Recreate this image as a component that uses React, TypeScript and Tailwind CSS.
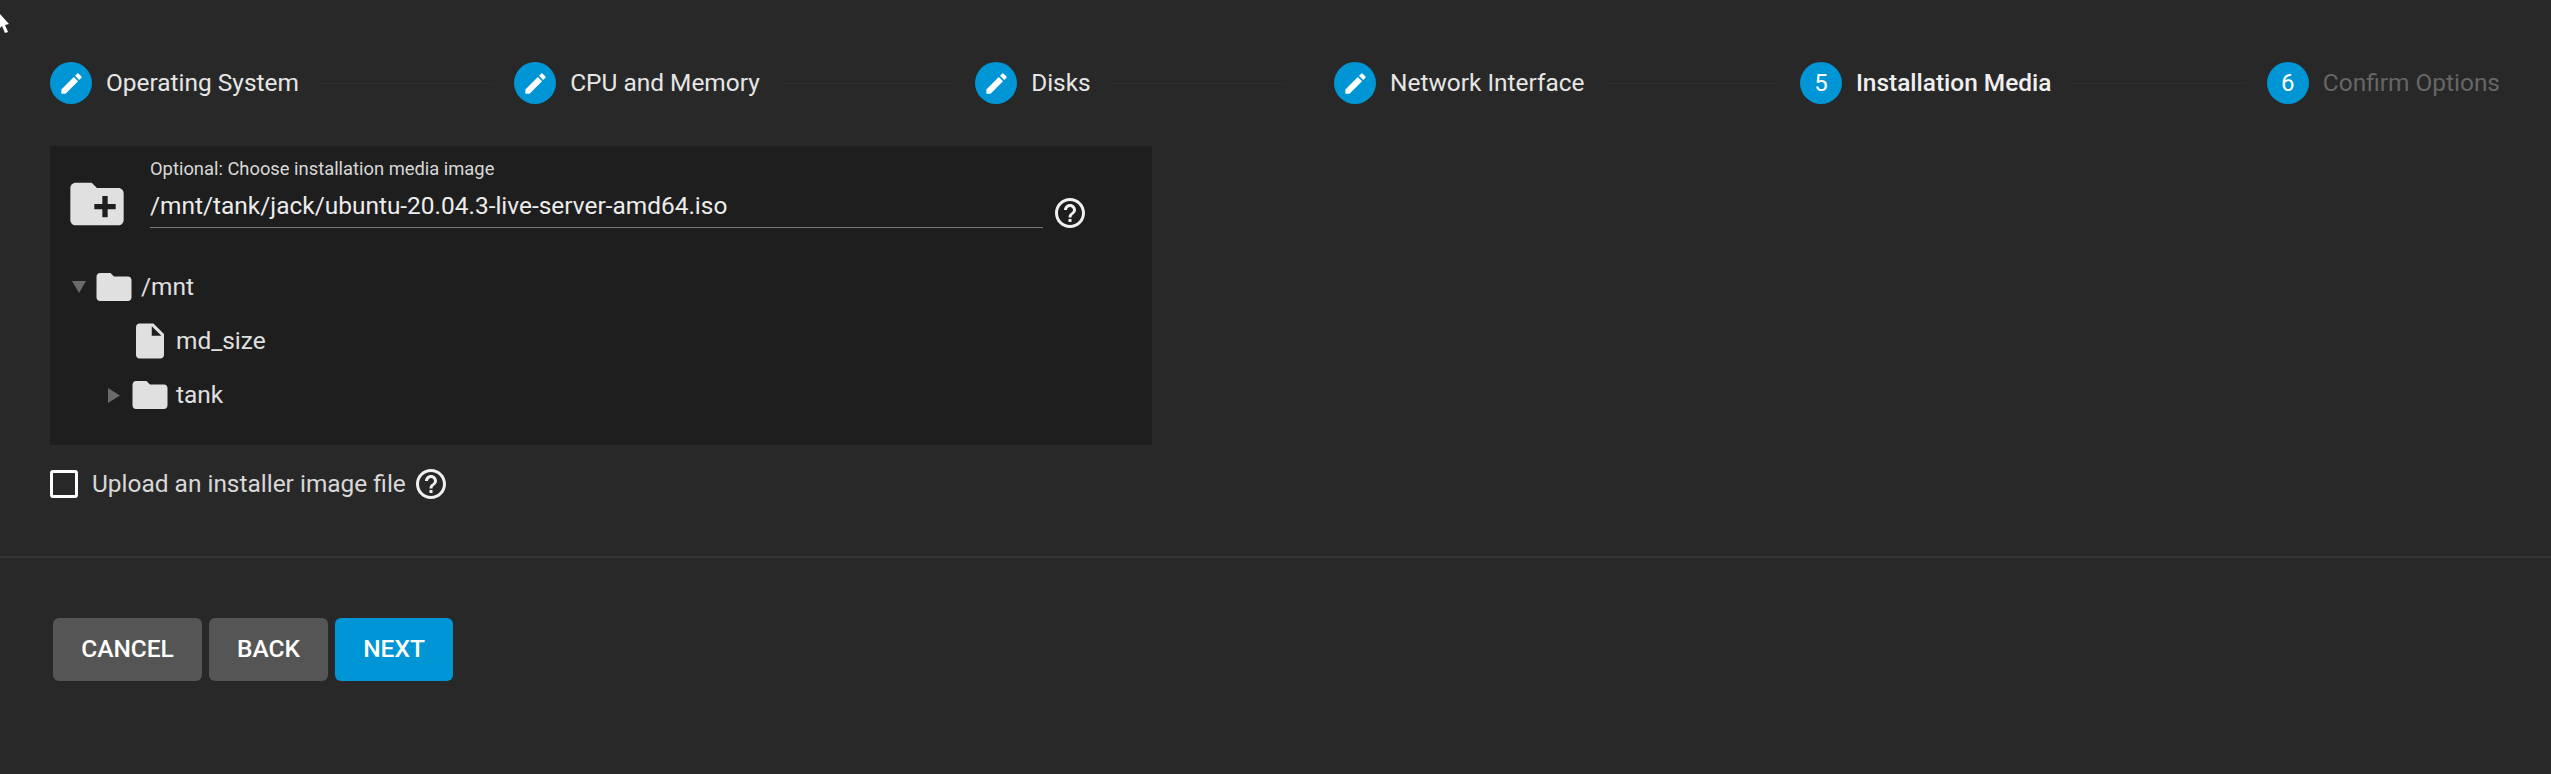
import { MdCreateNewFolder, MdEdit, MdFolder, MdHelpOutline, MdInsertDriveFile } from 'react-icons/md';

const steps = [
  { label: 'Operating System', done: true },
  { label: 'CPU and Memory', done: true },
  { label: 'Disks', done: true },
  { label: 'Network Interface', done: true },
  { label: 'Installation Media', number: 5, active: true },
  { label: 'Confirm Options', number: 6 },
];

interface StepProps {
  label: string;
  done?: boolean;
  number?: number;
  active?: boolean;
}

function Step({ label, done, number, active }: StepProps) {
  return (
    <div className="flex items-center gap-[14px]">
      <div className="flex h-[42px] w-[42px] items-center justify-center rounded-full bg-[#0095d5] text-[24px] text-white">
        {done ? <MdEdit className="h-[27px] w-[27px]" /> : number}
      </div>
      <span
        className={
          active
            ? 'text-[24.45px] font-medium text-[#f0f0f0]'
            : done
              ? 'text-[24.45px] text-[#e6e6e6]'
              : 'text-[24.45px] text-[#666666]'
        }
      >
        {label}
      </span>
    </div>
  );
}

export default function App() {
  return (
    <div
      className="relative h-screen overflow-hidden bg-[#282828] pt-[62px]"
      style={{ fontFamily: 'Roboto, sans-serif' }}
    >
      {/* mouse pointer caught in the capture */}
      <svg className="absolute left-0 top-[14px] h-[20px] w-[10px]" viewBox="0 0 10 20">
        <path d="M0 0 L9 10 L5 11 L8 18 L5 19 L2 12 L0 14 Z" fill="#ffffff" />
      </svg>

      <div className="ml-[50px] mr-[51px] flex items-center">
        {steps.map((step, i) => (
          <div key={step.label} className={i < 5 ? 'flex grow items-center' : 'flex items-center'}>
            <Step {...step} />
            {i < 5 && (
              <div className={i === 2 ? 'ml-[20px] mr-[48px] h-px flex-1 bg-[#2e2e2e]' : 'mx-[20px] h-px flex-1 bg-[#2e2e2e]'} />
            )}
          </div>
        ))}
      </div>

      <div className="ml-[50px] mt-[42px] h-[299px] w-[1102px] bg-[#1e1e1e]">
        <div className="flex items-start">
          <MdCreateNewFolder className="ml-[15px] mt-[26px] h-[64px] w-[64px] text-[#e0e0e0]" />
          <div className="ml-[21px] w-[893px] pt-[11px]">
            <div className="text-[18.35px] leading-[24px] text-[#d8d8d8]">Optional: Choose installation media image</div>
            <div className="mt-[8px] h-[39px] border-b border-[#777777] text-[24.45px] leading-[34px] text-[#ececec]">
              /mnt/tank/jack/ubuntu-20.04.3-live-server-amd64.iso
            </div>
          </div>
          <MdHelpOutline className="ml-[9px] mt-[49px] h-[36px] w-[36px] text-[#f0f0f0]" />
        </div>

        <div className="mt-[24px] flex h-[54px] items-center">
          <svg className="ml-[22px] h-[12px] w-[14px]" viewBox="0 0 14 12">
            <path d="M0 0 H14 L7 12 Z" fill="#6b6b6b" />
          </svg>
          <MdFolder className="ml-[7px] h-[42px] w-[42px] text-[#e0e0e0]" />
          <span className="ml-[6px] text-[24.45px] text-[#e0e0e0]">/mnt</span>
        </div>
        <div className="flex h-[54px] items-center">
          <MdInsertDriveFile className="ml-[79px] h-[42px] w-[42px] text-[#e0e0e0]" />
          <span className="ml-[5px] text-[24.45px] text-[#e0e0e0]">md_size</span>
        </div>
        <div className="flex h-[54px] items-center">
          <svg className="ml-[58px] h-[15px] w-[12px]" viewBox="0 0 12 15">
            <path d="M0 0 L12 7.5 L0 15 Z" fill="#6b6b6b" />
          </svg>
          <MdFolder className="ml-[9px] h-[42px] w-[42px] text-[#e0e0e0]" />
          <span className="ml-[5px] text-[24.45px] text-[#e0e0e0]">tank</span>
        </div>
      </div>

      <div className="ml-[50px] mt-[21px] flex items-center">
        <div className="h-[28px] w-[28px] rounded-[3px] border-[3px] border-white" />
        <span className="ml-[14px] text-[24.45px] text-[#d8d8d8]">Upload an installer image file</span>
        <MdHelpOutline className="ml-[7px] h-[36px] w-[36px] text-[#f0f0f0]" />
      </div>

      <div className="mt-[53px] h-[2px] bg-[#353535]" />

      <div className="ml-[53px] mt-[60px] flex gap-[7px]">
        <button className="h-[63px] w-[149px] rounded-[6px] bg-[#555555] text-[24.5px] font-medium text-white">CANCEL</button>
        <button className="h-[63px] w-[119px] rounded-[6px] bg-[#555555] text-[24.5px] font-medium text-white">BACK</button>
        <button className="h-[63px] w-[118px] rounded-[6px] bg-[#0095d5] text-[24.5px] font-medium text-white">NEXT</button>
      </div>
    </div>
  );
}
